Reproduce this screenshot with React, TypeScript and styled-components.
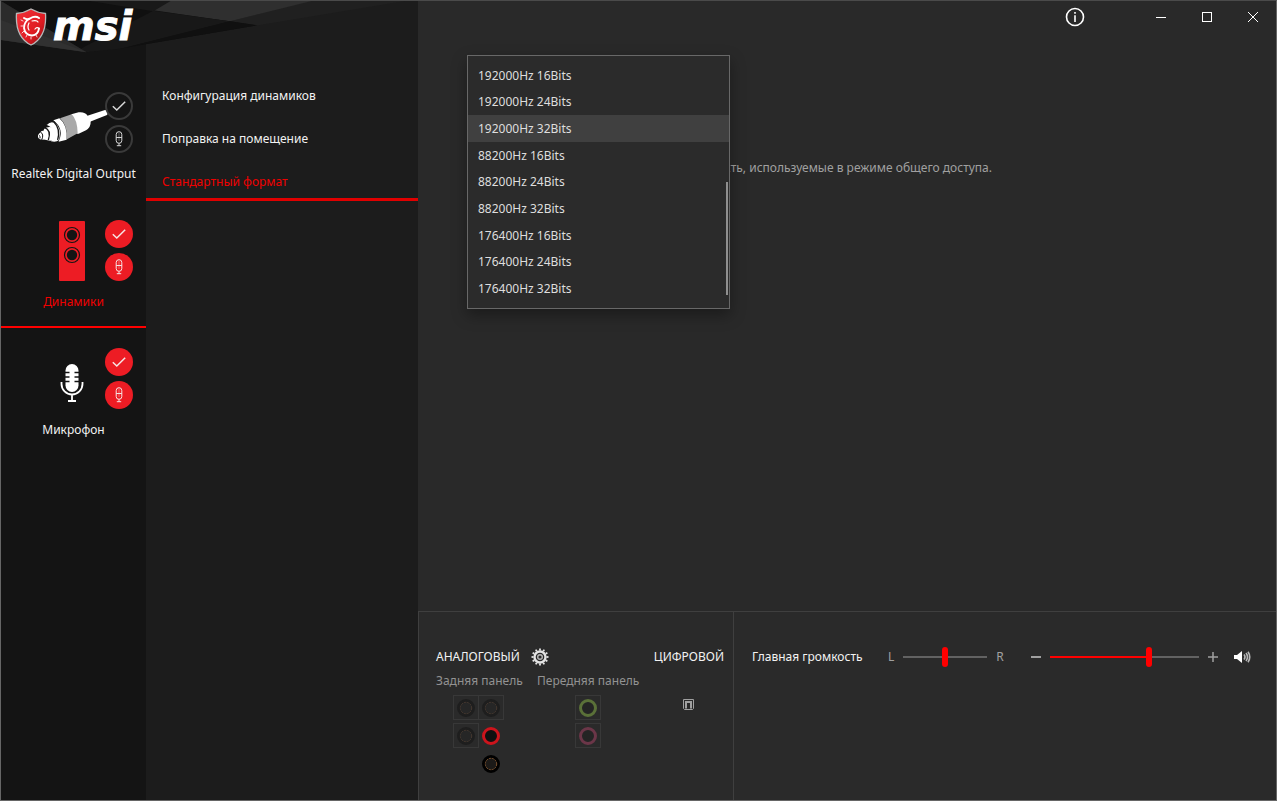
import React, { useState } from "react";
import styled, { createGlobalStyle, css } from "styled-components";

const GlobalStyle = createGlobalStyle`
  *, *::before, *::after { box-sizing: border-box; }
  body { margin: 0; background: #292929; }
  body, button, select, input {
    font-family: "Noto Sans", "Open Sans", sans-serif;
    font-size: 12px;
    line-height: 20px;
  }
  button { margin: 0; padding: 0; border: 0; background: none; color: inherit; cursor: pointer; }
  svg { display: block; }
`;

const Window = styled.div`
  display: flex;
  min-height: 100vh;
  border: 1px solid #666;
  border-top-color: #4a4a4a;
  background: #292929;
  color: #f2f2f2;
`;

const Left = styled.div`
  display: flex;
  flex-direction: column;
  flex: none;
  width: 417px;
`;

const Brand = styled.header`
  position: relative;
  height: 53px;
  background: linear-gradient(90deg, #141414 145px, #1c1c1c 145px);
`;

const Facets = styled.svg`
  width: 417px;
  height: 53px;
`;

const Logo = styled.div`
  position: absolute;
  top: 7px;
  left: 14px;
  display: flex;
  gap: 6px;
`;

const Wordmark = styled.span`
  font: italic 700 40px/36px "DejaVu Sans", sans-serif;
  -webkit-text-stroke: 1px #fff;
  color: #fff;
`;

const Columns = styled.div`
  display: flex;
  flex: 1;
`;

const Devices = styled.nav`
  width: 145px;
  padding-top: 18px;
  background: #141414;
`;

const Device = styled.div<{ $active?: boolean }>`
  display: flex;
  flex-direction: column;
  height: 128px;
  padding-top: 18px;
  border-bottom: 2px solid ${(p) => (p.$active ? "#f00" : "transparent")};
  color: ${(p) => (p.$active ? "#f00000" : "#f2f2f2")};
`;

const DeviceRow = styled.div`
  display: flex;
  padding-left: 33px;
`;

const DeviceIcon = styled.svg`
  width: 71px;
  height: 66px;
  overflow: visible;
`;

const Badges = styled.div`
  position: relative;
  display: flex;
  flex-direction: column;
  gap: 5px;
  padding-top: 2px;
`;

const Badge = styled.button<{ $on?: boolean }>`
  display: grid;
  place-items: center;
  width: 28px;
  height: 28px;
  border-radius: 50%;
  color: #f6e6e6;
  ${(p) =>
    p.$on
      ? css`
          background: #ed1c24;
        `
      : css`
          background: #141414;
          border: 2px solid #3a3a3a;
          color: #d8d8d8;
        `}
`;

const DeviceName = styled.button`
  margin-top: 8px;
  white-space: nowrap;
`;

const Tabs = styled.nav`
  flex: 1;
  padding-top: 18px;
  background: #1c1c1c;
`;

const Tab = styled.button<{ $active?: boolean }>`
  display: block;
  width: 100%;
  height: 43px;
  padding: 7px 16px 0;
  border-bottom: 3px solid ${(p) => (p.$active ? "#e00000" : "transparent")};
  color: ${(p) => (p.$active ? "#f00000" : "#f2f2f2")};
  text-align: left;
`;

const Main = styled.main`
  display: flex;
  flex: 1;
  flex-direction: column;
  min-width: 0;
`;

const TitleBar = styled.div`
  display: flex;
  justify-content: flex-end;
  height: 32px;
`;

const TitleButton = styled.button<{ $apart?: boolean }>`
  display: grid;
  place-items: center;
  width: 46px;
  height: 32px;
  margin-right: ${(p) => (p.$apart ? "40px" : "0")};
  color: #fff;
`;

const Content = styled.section`
  position: relative;
  flex: 1;
  padding: 125px 24px 0 50px;
`;

const Description = styled.p`
  display: flex;
  justify-content: flex-end;
  width: 524px;
  margin: 0;
  overflow: hidden;
  color: #a0a0a0;
  white-space: nowrap;
`;

const Popup = styled.div`
  position: absolute;
  top: 22px;
  left: 49px;
  width: 263px;
  height: 254px;
  padding: 6px 0;
  border: 1px solid #686868;
  background: #2b2b2b;
  box-shadow: 0 6px 14px rgba(0, 0, 0, 0.35);
`;

const FormatList = styled.select`
  display: block;
  width: 100%;
  height: 240px;
  padding: 0;
  border: 0;
  outline: 0;
  overflow: hidden;
  background: transparent;
  color: #dedede;
`;

const FormatOption = styled.option`
  height: 27px;
  min-height: 0;
  padding: 5px 9px 2px 10px;
  line-height: 20px;
  color: #dedede;

  &:nth-child(3n + 1) {
    height: 26px;
  }
  &:checked {
    background: linear-gradient(#404040, #404040);
    color: #dedede;
  }
`;

const ScrollThumb = styled.span`
  position: absolute;
  right: 1px;
  bottom: 13px;
  width: 2px;
  height: 113px;
  background: #8f8f8f;
`;

const BottomBar = styled.footer`
  display: flex;
  height: 189px;
  border-top: 1px solid #3f3f3f;
  background: #2a2a2a;
`;

const Jacks = styled.section`
  display: flex;
  justify-content: space-between;
  width: 316px;
  padding: 35px 9px 0 17px;
  border: solid #3f3f3f;
  border-width: 0 1px;
`;

const Analog = styled.div`
  display: flex;
  flex-direction: column;
  gap: 4px;
`;

const Heading = styled.h2`
  margin: 0;
  font-size: 12px;
  line-height: 20px;
  font-weight: 400;
`;

const HeadingRow = styled.div`
  display: flex;
  align-items: center;
  height: 20px;
  gap: 11px;
`;

const Panels = styled.div`
  display: flex;
  gap: 17px;
`;

const Panel = styled.div<{ $width: number }>`
  display: flex;
  flex-direction: column;
  align-items: center;
  gap: 4px;
  width: ${(p) => p.$width}px;
  color: #929292;
`;

const PanelName = styled.span`
  align-self: flex-start;
  white-space: nowrap;
`;

const JackGrid = styled.div<{ $columns: number }>`
  display: grid;
  grid-template-columns: repeat(${(p) => p.$columns}, 25px);
  row-gap: 3px;
`;

const JackCell = styled.div<{ $framed?: boolean }>`
  display: grid;
  place-items: center;
  height: 25px;
  margin-right: -1px;
  outline: 1px solid ${(p) => (p.$framed ? "#383838" : "transparent")};
  outline-offset: -1px;
`;

const Digital = styled.div`
  display: flex;
  flex-direction: column;
  align-items: center;
  gap: 32px;
`;

const Volume = styled.section`
  display: flex;
  flex: 1;
  align-items: center;
  height: 20px;
  margin: 35px 25px 0 18px;
  color: #a0a0a0;
`;

const VolumeLabel = styled.label`
  width: 136px;
  color: #f2f2f2;
  white-space: nowrap;
`;

const SliderGroup = styled.div<{ $grow?: boolean }>`
  display: flex;
  flex: ${(p) => (p.$grow ? "1" : "none")};
  align-items: center;
  gap: 9px;
  margin-left: ${(p) => (p.$grow ? "27px" : "0")};
`;

const Slider = styled.input<{ $fill?: number }>`
  flex: 1;
  width: 84px;
  height: 20px;
  margin: 0;
  appearance: none;
  background: linear-gradient(
      90deg,
      #f00 ${(p) => p.$fill ?? 0}%,
      #626262 ${(p) => p.$fill ?? 0}%
    )
    center / 100% 2px no-repeat;

  &::-webkit-slider-thumb {
    appearance: none;
    width: 6px;
    height: 20px;
    border-radius: 3px;
    background: #f00;
  }
`;

const StepButton = styled.button`
  width: 10px;
  height: 20px;
`;

const MuteButton = styled.button`
  margin-left: 16px;
  color: #f2f2f2;
`;

const formats = [
  "192000Hz 16Bits",
  "192000Hz 24Bits",
  "192000Hz 32Bits",
  "88200Hz 16Bits",
  "88200Hz 24Bits",
  "88200Hz 32Bits",
  "176400Hz 16Bits",
  "176400Hz 24Bits",
  "176400Hz 32Bits",
];

const CheckIcon = () => (
  <svg width="14" height="12" viewBox="0 0 14 12" fill="none" stroke="currentColor" strokeWidth="1.5">
    <path d="M.8 6.2 4.8 10 13.2 1.8" />
  </svg>
);

const SmallMicIcon = () => (
  <svg width="10" height="16" viewBox="0 0 10 16" fill="none" stroke="currentColor">
    <rect x="2.2" y=".7" width="5.6" height="11.6" rx="2.8" />
    <path d="M2.2 6.500h5.600M5 12.300v2.400M2.800 14.700h4.400" />
    <path d="M5 2v8" strokeOpacity=".4" />
  </svg>
);

const JackPlug = () => (
  <DeviceIcon viewBox="0 0 71 66">
    <g transform="translate(-34 -10) scale(.33333)" fill="#fff">
      <path d="M260 108 315 90q9-1 9 9l-3 6-53 21z" />
      <path d="M214 103 236 97q20-2 27 11 11 6 9 16 1 18-14 27l-22 10h-6z" />
      <path d="M180 115 215 103q17 16 18 57l-32 18q2-42-21-63z" fill="#a9a9a9" />
      <path d="M160 121 178 115q25 20 22 64l-24 6q18-38-16-64z" />
      <path d="M139 134q10-13 24-8 24 18 14 54-8 8-24 4 22-36-14-50z" />
      <path d="M139 134q10-12 23-8 20 20 11 54" fill="none" stroke="#141414" strokeWidth="4" />
      <path d="M133 146q10-8 24-4 16 14 8 34-8 10-26 4l-12-2q-1-20 6-32z" />
      <path d="M133 142q22 8 12 38" fill="none" stroke="#141414" strokeWidth="4" />
      <path d="M120 158q8-12 14 0t-1 19q-10 6-18-3-4-9 5-16z" />
      <path d="M121 156q12 6 4 24M117 166q5 2 3 9" fill="none" stroke="#141414" strokeWidth="3" />
    </g>
  </DeviceIcon>
);

const SpeakerTower = () => (
  <DeviceIcon viewBox="0 0 71 66">
    <rect x="25" y="3" width="26" height="60" rx="1" fill="#ed1c24" />
    {[17, 37].map((cy) => (
      <g key={cy}>
        <circle cx="38" cy={cy} r="7.5" fill="none" stroke="#141414" strokeWidth="1.2" />
        <circle cx="38" cy={cy} r="5.2" fill="#141414" />
      </g>
    ))}
  </DeviceIcon>
);

const Microphone = () => (
  <DeviceIcon viewBox="0 0 71 66">
    <rect x="31.5" y="18" width="13" height="28" rx="6.5" fill="#fff" />
    <path d="M31 26.5h4.5M31 31h4.5M31 35.5h4.5M40.500 26.500H45M40.500 31H45M40.500 35.500H45" stroke="#141414" strokeWidth="1.6" />
    <path d="M27.500 36v2a10.500 10.500 0 0 0 21 0v-2M38 49v6M34 55h8" fill="none" stroke="#fff" strokeWidth="1.8" />
  </DeviceIcon>
);

const Shield = () => (
  <svg width="32" height="38" viewBox="0 0 32 38">
    <defs>
      <linearGradient id="shield" x1="0" y1="0" x2="1" y2="1">
        <stop offset="0" stopColor="#f0323a" />
        <stop offset=".6" stopColor="#e01b22" />
        <stop offset="1" stopColor="#8d0e13" />
      </linearGradient>
    </defs>
    <path
      d="M16 1q7 4 14.500 4.500Q32 29 16 37 0 29 1.500 5.500 9 5 16 1z"
      fill="url(#shield)"
      stroke="#b9b9b9"
      strokeWidth="1.300"
    />
    <g fill="none" stroke="#fff" strokeLinecap="round">
      <path d="M9 10q3 2 6 .5 5-3 9-.5" strokeWidth="2" />
      <path d="M14 11q-5 3-5 9 1 7 8 7.500 6-.5 7-7" strokeWidth="1.800" />
      <path d="M24 20.500q-2-2-4 .5M17 13q5-1 6 1M14 15q-2 4 0 7" strokeWidth="1.200" />
      <path d="M8 13l-2-1M8 18l-2 0M9 23l-2 2M12 27l-1 2M16 29v2M21 27l1 2" strokeWidth=".8" />
    </g>
  </svg>
);

const teeth = Array.from({ length: 12 }, (_, i) => i * 30);

const GearIcon = () => (
  <svg width="18" height="18" viewBox="-9 -9 18 18" fill="none" stroke="#e4e4e4">
    <circle r="5.500" strokeWidth="2.400" />
    <circle r="2.300" strokeWidth="1.400" stroke="#b8b8b8" />
    {teeth.map((a) => (
      <path key={a} d="M0-6.500V-8.500" strokeWidth="1.800" transform={`rotate(${a})`} />
    ))}
  </svg>
);

type JackKind = "idle" | "red" | "black" | "green" | "pink";

const jackColors: Record<JackKind, { ring: string; core: string; pin?: string }> = {
  idle: { ring: "#1e1e1e", core: "#262626", pin: "#4a3a30" },
  red: { ring: "#cc141c", core: "#101010" },
  black: { ring: "#000", core: "#1c1a18", pin: "#8a5a32" },
  green: { ring: "#5a7038", core: "#242424" },
  pink: { ring: "#6b3648", core: "#242424" },
};

const Jack = ({ kind }: { kind: JackKind }) => {
  const c = jackColors[kind];
  return (
    <svg width="18" height="18" viewBox="0 0 18 18">
      <circle cx="9" cy="9" r="7.500" fill={c.core} stroke={c.ring} strokeWidth="3" />
      {c.pin && <circle cx="9" cy="9" r="5.700" fill="none" stroke={c.pin} strokeDasharray="2 1" strokeWidth=".9" />}
    </svg>
  );
};

const OpticalPort = () => (
  <svg width="11" height="11" viewBox="0 0 11 11" fill="none" stroke="#a0a0a0">
    <path d="M.5.500h10v9l-1 1h-8l-1-1z" />
    <path d="M3 9.500V3h5v6.500" strokeWidth="2" />
  </svg>
);

const devices = [
  { name: "Realtek Digital Output", Icon: JackPlug, on: false, active: false },
  { name: "Динамики", Icon: SpeakerTower, on: true, active: true },
  { name: "Микрофон", Icon: Microphone, on: true, active: false },
];

const tabs = ["Конфигурация динамиков", "Поправка на помещение", "Стандартный формат"];

export default function App() {
  const [format, setFormat] = useState("192000Hz 32Bits");
  const [balance, setBalance] = useState(50);
  const [volume, setVolume] = useState(67);

  return (
    <>
      <GlobalStyle />
      <Window>
        <Left>
          <Brand>
            <Facets viewBox="3 3 1251 159" preserveAspectRatio="none">
              <path d="M925 3H1215L775 76 690 64z" fill="#202020" />
              <path d="M500 3H935L690 64 440 32z" fill="#2f2f2f" />
              <path d="M3 3H270L770 76 440 132 260 157z" fill="#101010" />
              <path d="M270 3H512L460 34z" fill="#191919" />
              <path d="M460 32 690 64 370 145 260 157 235 150z" fill="#181818" />
              <path d="M690 64 770 76 440 132 360 146z" fill="#101010" />
              <path d="M3 3 260 157 3 120z" fill="#2b2b2b" />
              <path d="M3 60 260 157 3 120z" fill="#313131" />
            </Facets>
            <Logo>
              <Shield />
              <Wordmark>msi</Wordmark>
            </Logo>
          </Brand>
          <Columns>
            <Devices>
              {devices.map(({ name, Icon, on, active }) => (
                <Device key={name} $active={active}>
                  <DeviceRow>
                    <Icon />
                    <Badges>
                      <Badge $on={on} aria-label="По умолчанию">
                        <CheckIcon />
                      </Badge>
                      <Badge $on={on} aria-label="Связь">
                        <SmallMicIcon />
                      </Badge>
                    </Badges>
                  </DeviceRow>
                  <DeviceName>{name}</DeviceName>
                </Device>
              ))}
            </Devices>
            <Tabs>
              {tabs.map((tab, i) => (
                <Tab key={tab} $active={i === 2}>
                  {tab}
                </Tab>
              ))}
            </Tabs>
          </Columns>
        </Left>
        <Main>
          <TitleBar>
            <TitleButton $apart aria-label="Информация">
              <svg width="20" height="20" viewBox="0 0 20 20" fill="none" stroke="currentColor" strokeWidth="1.600">
                <circle cx="10" cy="10" r="8.500" />
                <path d="M10 8.200V15M10 5v1.800" />
              </svg>
            </TitleButton>
            <TitleButton aria-label="Свернуть">
              <svg width="10" height="10" stroke="currentColor">
                <path d="M0 5.500h10" />
              </svg>
            </TitleButton>
            <TitleButton aria-label="Развернуть">
              <svg width="10" height="10" fill="none" stroke="currentColor">
                <rect x=".5" y=".5" width="9" height="9" />
              </svg>
            </TitleButton>
            <TitleButton aria-label="Закрыть">
              <svg width="10" height="10" stroke="currentColor">
                <path d="M0 0 10 10M10 0 0 10" />
              </svg>
            </TitleButton>
          </TitleBar>
          <Content>
            <Description>
              Выберите частоту дискретизации и разрядность, используемые в режиме общего доступа.
            </Description>
            <Popup>
              <FormatList
                size={9}
                aria-label="Стандартный формат"
                value={format}
                onChange={(e) => setFormat(e.target.value)}
              >
                {formats.map((f) => (
                  <FormatOption key={f} value={f}>
                    {f}
                  </FormatOption>
                ))}
              </FormatList>
              <ScrollThumb />
            </Popup>
          </Content>
          <BottomBar>
            <Jacks>
              <Analog>
                <HeadingRow>
                  <Heading>АНАЛОГОВЫЙ</Heading>
                  <button aria-label="Настройки разъёмов">
                    <GearIcon />
                  </button>
                </HeadingRow>
                <Panels>
                  <Panel $width={84}>
                    <PanelName>Задняя панель</PanelName>
                    <JackGrid $columns={2}>
                      <JackCell $framed>
                        <Jack kind="idle" />
                      </JackCell>
                      <JackCell $framed>
                        <Jack kind="idle" />
                      </JackCell>
                      <JackCell $framed>
                        <Jack kind="idle" />
                      </JackCell>
                      <JackCell>
                        <Jack kind="red" />
                      </JackCell>
                      <JackCell />
                      <JackCell>
                        <Jack kind="black" />
                      </JackCell>
                    </JackGrid>
                  </Panel>
                  <Panel $width={100}>
                    <PanelName>Передняя панель</PanelName>
                    <JackGrid $columns={1}>
                      <JackCell $framed>
                        <Jack kind="green" />
                      </JackCell>
                      <JackCell $framed>
                        <Jack kind="pink" />
                      </JackCell>
                    </JackGrid>
                  </Panel>
                </Panels>
              </Analog>
              <Digital>
                <Heading>ЦИФРОВОЙ</Heading>
                <OpticalPort />
              </Digital>
            </Jacks>
            <Volume>
              <VolumeLabel htmlFor="volume">Главная громкость</VolumeLabel>
              <SliderGroup>
                <span>L</span>
                <Slider
                  type="range"
                  aria-label="Баланс"
                  value={balance}
                  onChange={(e) => setBalance(Number(e.target.value))}
                />
                <span>R</span>
              </SliderGroup>
              <SliderGroup $grow>
                <StepButton aria-label="Тише" onClick={() => setVolume((v) => Math.max(0, v - 1))}>
                  <svg width="10" height="10" stroke="currentColor" strokeWidth="2">
                    <path d="M0 5h10" />
                  </svg>
                </StepButton>
                <Slider
                  id="volume"
                  type="range"
                  $fill={volume}
                  value={volume}
                  onChange={(e) => setVolume(Number(e.target.value))}
                />
                <StepButton aria-label="Громче" onClick={() => setVolume((v) => Math.min(100, v + 1))}>
                  <svg width="10" height="10" stroke="currentColor" strokeWidth="1.500">
                    <path d="M0 5h10M5 0v10" />
                  </svg>
                </StepButton>
              </SliderGroup>
              <MuteButton aria-label="Без звука">
                <svg width="17" height="12" viewBox="0 0 17 12">
                  <path d="M0 4h3l5-4v12L3 8H0z" fill="#fff" />
                  <path
                    d="M10 3.500q2 2.500 0 5M12 2q3 4 0 8M14 .8q3.500 5.200 0 10.400"
                    fill="none"
                    stroke="#b5b5b5"
                    strokeWidth="1.600"
                  />
                </svg>
              </MuteButton>
            </Volume>
          </BottomBar>
        </Main>
      </Window>
    </>
  );
}
